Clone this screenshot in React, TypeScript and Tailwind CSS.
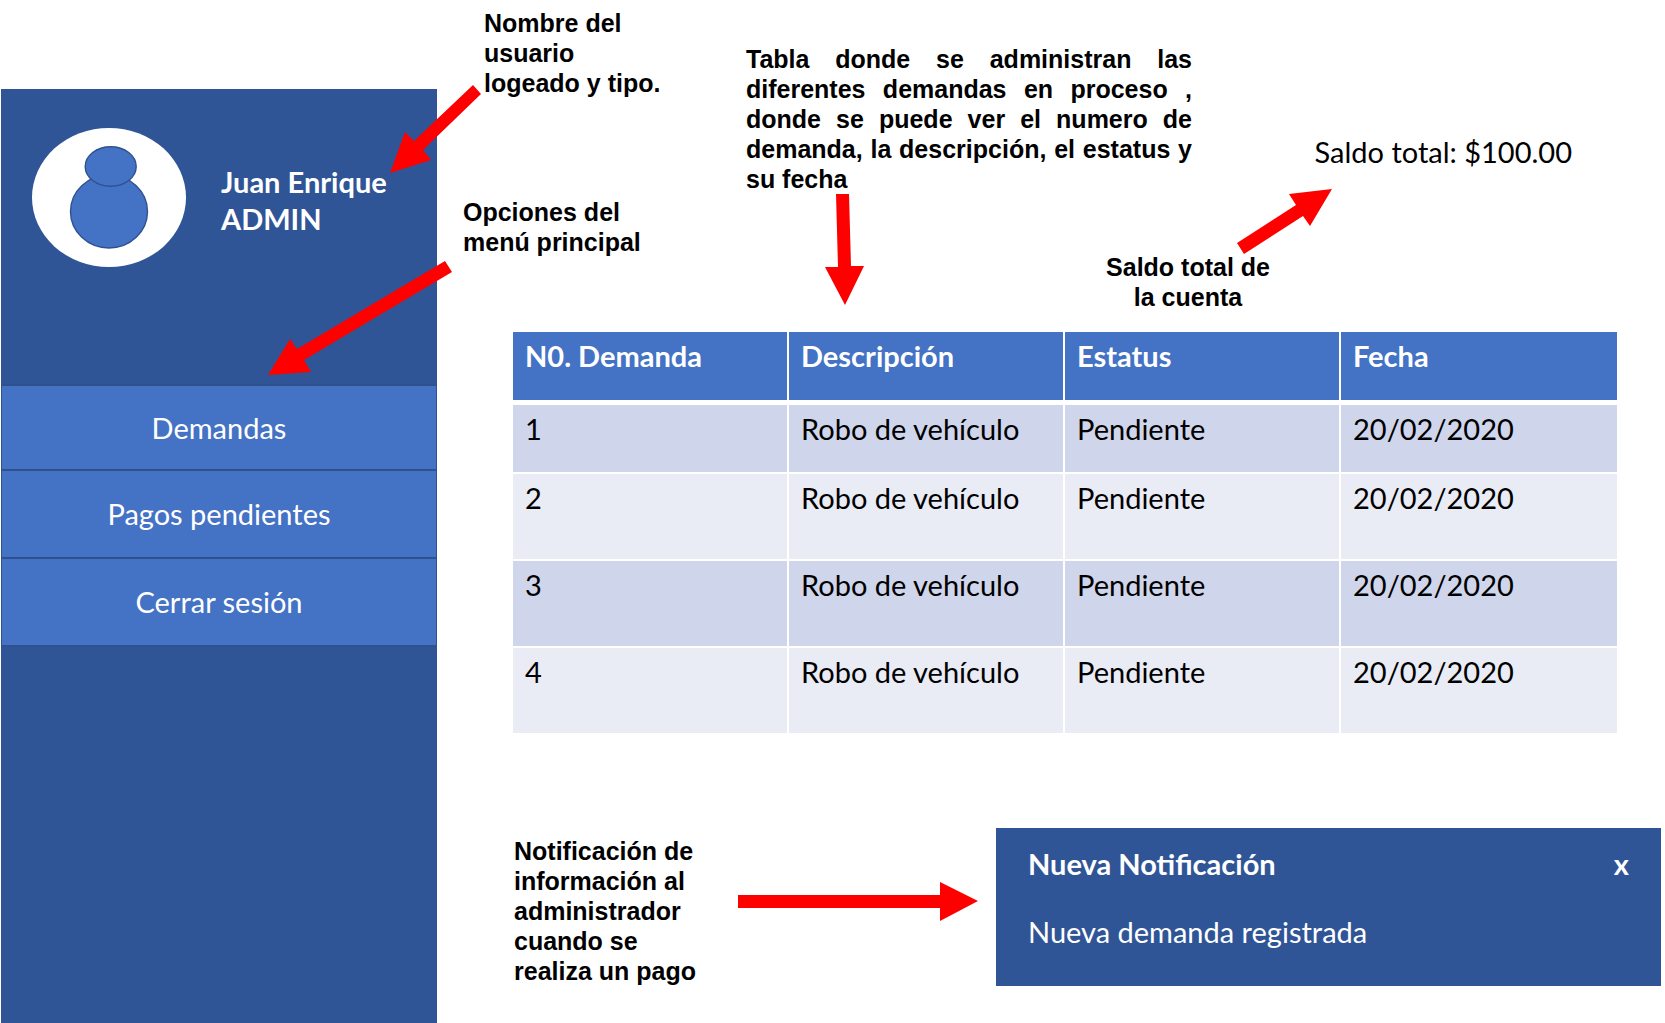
const menu = ["Demandas", "Pagos pendientes", "Cerrar sesión"];

const columns = ["N0. Demanda", "Descripción", "Estatus", "Fecha"];

const rows = [1, 2, 3, 4].map((id) => ({
  id,
  description: "Robo de vehículo",
  status: "Pendiente",
  date: "20/02/2020",
}));

const noteText = "font-['Liberation_Sans',sans-serif] text-[25px] leading-[30px] font-bold";

function Arrow({ width, height, points, className }: { width: number; height: number; points: string; className: string }) {
  return (
    <svg aria-hidden="true" width={width} height={height} viewBox={`0 0 ${width} ${height}`} className={className}>
      <polygon points={points} fill="#ff0000" />
    </svg>
  );
}

function Avatar() {
  return (
    <svg role="img" aria-label="Avatar" width="154" height="139" viewBox="0 0 154 139" className="shrink-0">
      <ellipse cx="77" cy="69.5" rx="77" ry="69.5" fill="#fff" />
      <g fill="#4472c4" stroke="#2f528f" strokeWidth="1.4">
        <ellipse cx="77" cy="83.5" rx="38.5" ry="36.5" />
        <ellipse cx="78.7" cy="38.5" rx="25.5" ry="19.8" />
      </g>
    </svg>
  );
}

function Sidebar() {
  return (
    <aside className="mt-[89px] ml-px w-[436px] shrink-0 bg-[#2f5597] text-white">
      <div className="flex h-[295px] items-start gap-[35px] pt-[39px] pl-[31px]">
        <Avatar />
        <p className="mt-[35px] text-[29px] leading-[37px] font-bold whitespace-nowrap">
          Juan Enrique
          <br />
          ADMIN
        </p>
      </div>
      <nav className="flex flex-col border-t-2 border-[#2f528f]">
        {menu.map((label) => (
          <button
            key={label}
            type="button"
            className="h-[88px] border-x border-b-2 border-[#2f528f] bg-[#4472c4] text-[29px] first:h-[85px]"
          >
            {label}
          </button>
        ))}
      </nav>
    </aside>
  );
}

function ClaimsTable() {
  return (
    <table className="w-full table-fixed border-separate border-spacing-0 text-left text-[29px] leading-[36px]">
      <thead>
        <tr className="h-[73px] bg-[#4472c4] text-white">
          {columns.map((name) => (
            <th key={name} scope="col" className="border-r-2 border-b-5 border-white px-3 pt-[6px] align-top font-bold last:border-r-0">
              {name}
            </th>
          ))}
        </tr>
      </thead>
      <tbody>
        {rows.map((row) => (
          <tr key={row.id} className="h-[87px] first:h-[69px] odd:bg-[#cfd5ea] even:bg-[#e9ebf5]">
            {[row.id, row.description, row.status, row.date].map((value, i) => (
              <td key={i} className="border-r-2 border-b-2 border-white px-3 pt-[6px] align-top last:border-r-0">
                {value}
              </td>
            ))}
          </tr>
        ))}
      </tbody>
    </table>
  );
}

export default function App() {
  return (
    <div className="flex min-h-screen bg-white font-[Lato,sans-serif] text-black">
      <Sidebar />
      <main className="min-w-0 flex-1">
        <div className="flex h-[332px]">
          <div className="w-[309px] shrink-0 pt-2 pl-[26px]">
            <div className={`relative ml-[21px] w-[182px] ${noteText}`}>
              Nombre del usuario logeado y tipo.
              <Arrow
                width={92}
                height={88}
                points="83,0 91,9 33,65 41,75 0,88 15,47 24,56"
                className="absolute top-[77px] right-full mr-[2px]"
              />
            </div>
            <div className={`relative mt-[99px] w-[190px] ${noteText}`}>
              Opciones del menú principal
              <Arrow
                width={184}
                height={114}
                points="177,0 184,11 36,99 43,111 0,114 22,78 29,88"
                className="absolute top-16 right-full mr-[11px]"
              />
            </div>
          </div>
          <div className="flex flex-1 flex-col pt-11">
            <div className="flex">
              <p className={`w-[446px] text-justify ${noteText}`}>
                Tabla donde se administran las diferentes demandas en proceso , donde se puede ver el numero de demanda, la
                descripción, el estatus y su fecha
              </p>
              <p className="mt-[90px] mr-[93px] ml-auto text-[29px] leading-[36px] whitespace-nowrap">Saldo total: $100.00</p>
            </div>
            <div className="flex items-start">
              <Arrow width={39} height={111} points="11,0 24,0 26,72 39,72 20,111 0,73 13,73" className="ml-[79px]" />
              <div className={`relative mt-[58px] mr-[392px] ml-auto w-[170px] text-center ${noteText}`}>
                Saldo total de la cuenta
                <Arrow
                  width={95}
                  height={65}
                  points="0,54 7,65 66,27 73,37 95,0 52,5 59,16"
                  className="absolute bottom-full left-[134px] -mb-[2px]"
                />
              </div>
            </div>
          </div>
        </div>
        <div className="pr-12 pl-[76px]">
          <ClaimsTable />
        </div>
        <div className="mt-[93px] flex items-start pr-1 pl-[77px]">
          <p className={`mt-2 w-[190px] ${noteText}`}>Notificación de información al administrador cuando se realiza un pago</p>
          <Arrow width={240} height={39} points="0,13 202,13 202,0 240,19 202,39 202,26 0,26" className="mt-[54px] ml-[34px] shrink-0" />
          <section className="ml-[18px] h-[158px] flex-1 bg-[#2f5597] px-8 pt-[18px] text-[29px] leading-[36px] text-white">
            <div className="flex justify-between">
              <h2 className="font-bold">Nueva Notificación</h2>
              <button type="button" aria-label="Cerrar notificación" className="font-bold">
                x
              </button>
            </div>
            <p className="mt-8">Nueva demanda registrada</p>
          </section>
        </div>
      </main>
    </div>
  );
}
